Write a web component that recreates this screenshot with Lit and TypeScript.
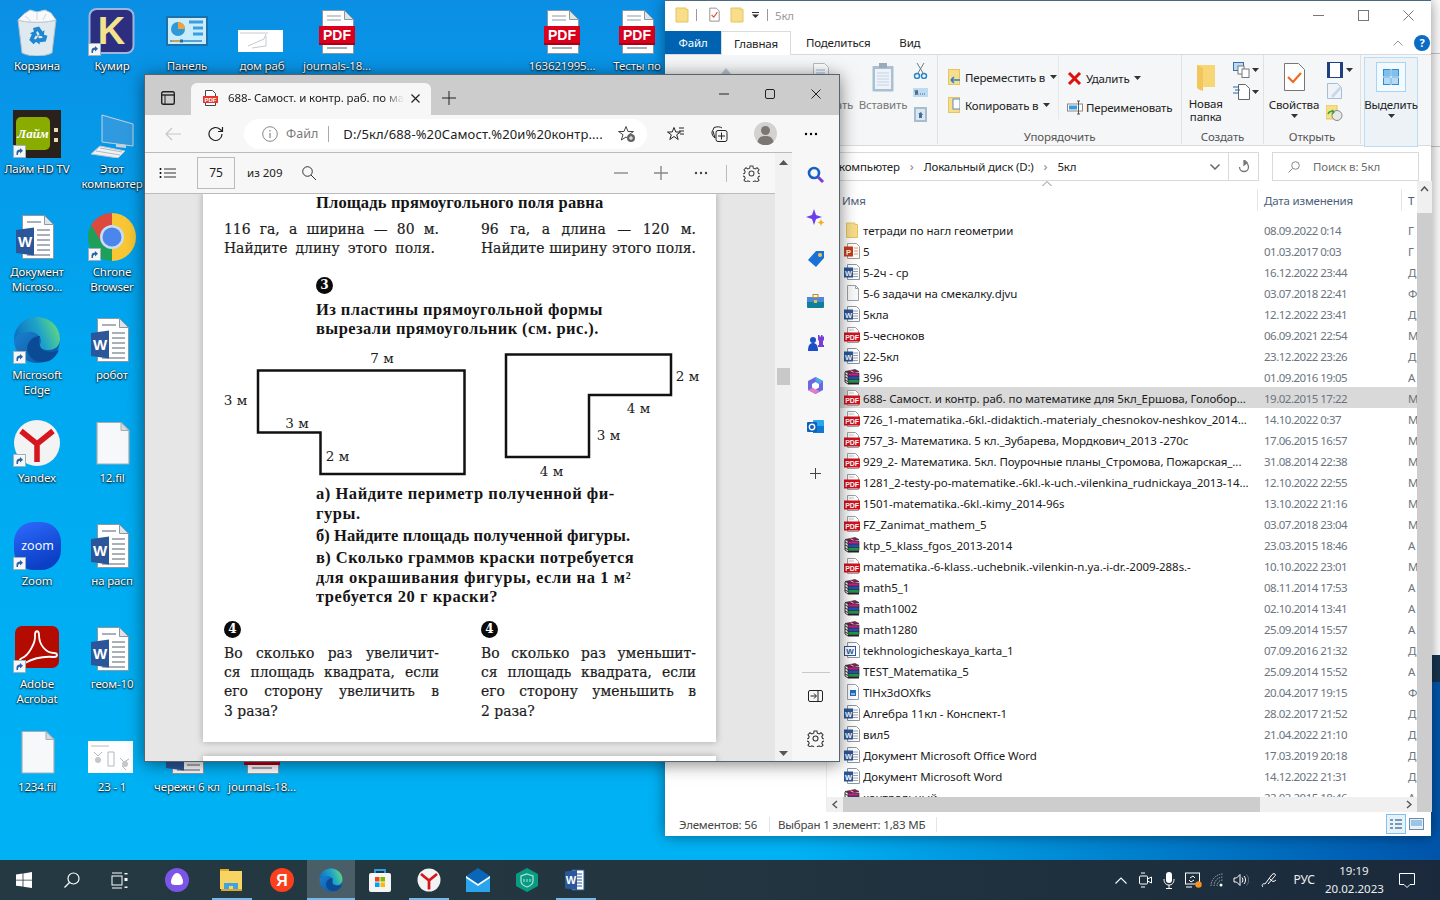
import { LitElement, html, css, svg } from 'lit';
import { customElement } from 'lit/decorators.js';

const ic = (w: number, h: number, vb: string, body: unknown) =>
  html`<svg width=${w} height=${h} viewBox=${vb} style="display:block;flex:none">${body}</svg>`;

const shortcut = svg`<g transform="translate(0 35)"><rect x=".5" y=".5" width="12" height="12" fill="#f4f6f8" stroke="#9fb0bd"/><path d="M3.5 10V7.5C3.5 5.5 5 4.500 7 4.500V3l3 2.700-3 2.700V6.800c-1.400 0-2 .6-2 3.200z" fill="#2a62a8"/></g>`;

const bigDoc = svg`<path d="M9.500 2.500h22l9 9v34h-31z" fill="#fff" stroke="#8c98a4"/><path d="M31.500 2.500v9h9z" fill="#dfe4e8" stroke="#8c98a4"/>`;
const bigPdf = ic(48, 48, '0 0 48 48', svg`${bigDoc}
  <path d="M14 8h14M14 12h14" stroke="#b5bcc3" stroke-width="1.400"/>
  <rect x="6" y="18" width="36" height="19" fill="#d8001c"/><rect x="6" y="35" width="36" height="2" fill="#a80016"/>
  <text x="24" y="32" text-anchor="middle" font-family="Liberation Sans" font-weight="700" font-size="14" fill="#fff">PDF</text>
  <path d="M14 40h20" stroke="#a9b0b7" stroke-width="2"/>`);
const bigWord = ic(48, 48, '0 0 48 48', svg`${bigDoc}
  <path d="M14 9h14M24 17h13M24 22h13M24 27h13M24 32h13M24 37h13M14 42h23" stroke="#a9b0b7" stroke-width="1.800"/>
  <path d="M3 17l18-2.500v28L3 40z" fill="#2b579a"/>
  <text x="12" y="34" text-anchor="middle" font-family="Liberation Sans" font-weight="700" font-size="15" fill="#fff">W</text>`);
const bigBlank = ic(48, 48, '0 0 48 48', svg`<path d="M9 3.500h24l8 8v33.500H9z" fill="#f6f8fa" stroke="#a4acb4" stroke-width="1.200"/><path d="M33 3.500v8h8z" fill="#d5dade" stroke="#a4acb4"/>`);

const edgeBody = svg`
  <defs><linearGradient id="eg1" x1="0" x2="1" y1=".6" y2=".3"><stop offset="0" stop-color="#0d6fc0"/><stop offset=".55" stop-color="#1fa3c9"/><stop offset="1" stop-color="#64dc7c"/></linearGradient>
  <linearGradient id="eg2" x1="0" x2="1" y1="0" y2="1"><stop offset="0" stop-color="#1b8ad8"/><stop offset="1" stop-color="#0c4f9e"/></linearGradient></defs>
  <circle cx="24" cy="24" r="23" fill="url(#eg2)"/>
  <path d="M1 24C1 11 11 1 24 1c13 0 23 10 23 22 0 7-5 11-11 11-6 0-10-2-10-4 0-1 2-2 2-5 0-5-6-10-13-9C8 17 1 20 1 24z" fill="url(#eg1)"/>
  <path d="M27 20c-9 0-15 9-12 17 3 8 13 11 21 8 4-2 8-6 10-11-4 2-9 3-14 1-5-2-7-8-5-15z" fill="#0b4a94"/>`;
const yandexBody = svg`<circle cx="24" cy="24" r="23" fill="#f3f3f3"/><path d="M8 12l16 13 16-13M24 25v18" fill="none" stroke="#d6151e" stroke-width="5.500"/>`;
const recycleArrow = svg`<path d="M19 19l6-1.500 3.500 5 2-1.200-.8 6.200-6-1 2-1.200-2.200-3.300-3 3z" fill="#1f86d0"/>`;

const desktopIcons: Record<string, unknown> = {
  bin: ic(48, 48, '0 0 48 48', svg`
    <path d="M5 12c10 3 28 3 38 0l-4 33c-8 4-22 4-30 0z" fill="#dfe9f0" stroke="#aebbc6"/>
    <path d="M5 12l6-6 6-4 7 2 8-2 6 3 5 7c-10 3-28 3-38 0z" fill="#f7f9fa" stroke="#c3ccd3"/>
    <path d="M12 8l6 5M24 5v7M33 6l-3 6" stroke="#d0d8de"/>
    <g transform="translate(1 1)">${recycleArrow}<g transform="rotate(120 24 27)">${recycleArrow}</g><g transform="rotate(240 24 27)">${recycleArrow}</g></g>`),
  kumir: ic(48, 48, '0 0 48 48', svg`<rect x="1.500" y="1" width="44" height="44" rx="7" fill="#2c2f80" stroke="#9fb6dc" stroke-width="2"/>
    <text x="23.500" y="36" text-anchor="middle" font-family="Liberation Sans" font-weight="700" font-size="38" fill="#f4e28c">K</text>${shortcut}`),
  panel: ic(48, 48, '0 0 48 48', svg`<rect x="3" y="8" width="42" height="30" fill="#1d6fa8"/><rect x="5" y="10" width="38" height="26" fill="#c8ecfb"/>
    <circle cx="15" cy="21" r="7" fill="#2c9ad8"/><path d="M15 21v-7a7 7 0 017 7z" fill="#f2a23a"/>
    <path d="M26 14h14M30 20h10M30 26h10" stroke="#3a9ee0" stroke-width="3"/><path d="M7 33h32" stroke="#2c8ccc" stroke-width="1.500"/><path d="M9 33h8" stroke="#e8a23a" stroke-width="1.500"/><rect x="17" y="31.500" width="3" height="3" fill="#1d6fa8"/>`),
  sketch: ic(48, 48, '0 0 48 48', svg`<rect x="0" y="22" width="45" height="22" fill="#fff"/><path d="M10 38l16-7 2-5M14 40l14-2 0-10M2 25h28" stroke="#b8bcc0" stroke-width=".8" fill="none"/>`),
  pdf: bigPdf,
  word: bigWord,
  blank: bigBlank,
  laim: ic(48, 48, '0 0 48 48', svg`<rect width="48" height="48" fill="#2a211d"/><rect x="3" y="7" width="34" height="33" rx="5" fill="#8aab00"/>
    <text x="20" y="28" text-anchor="middle" font-family="Liberation Serif" font-style="italic" font-weight="700" font-size="13" fill="#fff">Лайм</text>
    <rect x="41" y="18" width="4" height="4" fill="#e8dcb8"/><rect x="41" y="28" width="4" height="4" fill="#e8dcb8"/>${shortcut}`),
  pc: ic(48, 48, '0 0 48 48', svg`<path d="M14 5l31 9v22l-31-4z" fill="#2f9ae0" stroke="#c8d2da"/><path d="M28 34l10 1 0 3-10-1z" fill="#c8d2da"/><path d="M12 36l25 5-7 7-27-4z" fill="#eef2f5" stroke="#b8c2ca"/><path d="M8 41l24 4M12 38l22 4" stroke="#b0bac2"/>`),
  chrome: ic(48, 48, '0 0 48 48', svg`
    <path d="M24 0a24 24 0 0124 24 24 24 0 01-24 24l0-13 0-22z" fill="#f9c733"/>
    <path d="M24 0A24 24 0 003 12l10 17 11-16z" fill="#db4a3c"/>
    <path d="M3 12a24 24 0 0021 36V35L13 29z" fill="#1fa05a"/>
    <circle cx="24" cy="24" r="12" fill="#c9def6"/><circle cx="24" cy="24" r="9.500" fill="#4a86ec"/>${shortcut}`),
  edge: ic(48, 48, '0 0 48 48', svg`${edgeBody}${shortcut}`),
  yandex: ic(48, 48, '0 0 48 48', svg`${yandexBody}${shortcut}`),
  zoom: ic(48, 48, '0 0 48 48', svg`<defs><linearGradient id="zg" x1="0" x2=".4" y1="0" y2="1"><stop offset="0" stop-color="#2e6bff"/><stop offset="1" stop-color="#0b3fc4"/></linearGradient></defs>
    <rect x="1" y="0" width="47" height="48" rx="20" fill="url(#zg)"/><text x="24.500" y="28" text-anchor="middle" font-family="Open Sans" font-weight="500" font-size="12.500" fill="#fff">zoom</text>${shortcut}`),
  acrobat: ic(48, 48, '0 0 48 48', svg`<rect x="2" y="1" width="44" height="42" rx="7" fill="#b30b00"/>
    <path d="M9 33c6-2 14-15 13-23 0-5 4-5 4 0 0 10 7 18 15 18 4 0 4 4 0 4-11-1-20 1-29 6-5 2-7-3-3-5z" fill="none" stroke="#fff" stroke-width="1.800"/>${shortcut}`),
  photo: ic(48, 48, '0 0 48 48', svg`<rect x="0" y="13" width="45" height="32" fill="#fff"/><path d="M3 18h18M6 24l4 4 4-4M20 24h6v14h-6zM32 30l4 4 5-3M34 38l4 4" stroke="#b4b8bc" fill="none"/><circle cx="10" cy="32" r="3" fill="#c4c8cc"/><circle cx="37" cy="36" r="3" fill="#c4c8cc"/>`),
};

const desktopItems: [number, number, string, string][] = [
  [37, 8, 'bin', 'Корзина'], [112, 8, 'kumir', 'Кумир'], [187, 8, 'panel', 'Панель'], [262, 8, 'sketch', 'дом раб'],
  [337, 8, 'pdf', 'journals-18...'], [562, 8, 'pdf', '163621995...'], [637, 8, 'pdf', 'Тесты по'],
  [37, 110, 'laim', 'Лайм HD TV'], [112, 110, 'pc', 'Этот компьютер'],
  [37, 213, 'word', 'Документ Microso...'], [112, 213, 'chrome', 'Chrone Browser'],
  [37, 316, 'edge', 'Microsoft Edge'], [112, 316, 'word', 'робот'],
  [37, 419, 'yandex', 'Yandex'], [112, 419, 'blank', '12.fil'],
  [37, 522, 'zoom', 'Zoom'], [112, 522, 'word', 'на расп'],
  [37, 625, 'acrobat', 'Adobe Acrobat'], [112, 625, 'word', 'геом-10'],
  [37, 728, 'blank', '1234.fil'], [112, 728, 'photo', '23 - 1'], [187, 728, 'word', 'чережн 6 кл'], [262, 728, 'pdf', 'journals-18...'],
];

// small 16px list icons
const docOutline = svg`<path d="M3.500.5h8l3 3v12h-11z" fill="#fff" stroke="#9aa3ab"/><path d="M5 3h5" stroke="#c4c9ce"/>`;
const smallIcons: Record<string, unknown> = {
  folder: ic(16, 16, '0 0 16 16', svg`<path d="M2.500 1h8.500v1.500H13.500v13h-11z" fill="#f8dd8a" stroke="#e6c560"/>`),
  pdf: ic(16, 16, '0 0 16 16', svg`${docOutline}<rect x="0" y="5.500" width="16" height="9" fill="#d4111e"/><text x="8" y="12.500" text-anchor="middle" font-family="Liberation Sans" font-weight="700" font-size="7" fill="#fff">PDF</text>`),
  word: ic(16, 16, '0 0 16 16', svg`<path d="M3.500.5h9l3 3v12h-12z" fill="#fff" stroke="#8e979f"/><path d="M9 5h5M9 7.500h5M9 10h5M9 12.500h5" stroke="#9aa4ad"/><rect x="0" y="3.500" width="9" height="10" fill="#2b579a"/><text x="4.500" y="11.500" text-anchor="middle" font-family="Liberation Sans" font-weight="700" font-size="7.500" fill="#fff">W</text>`),
  wordx: ic(16, 16, '0 0 16 16', svg`<path d="M3.500.5h9l3 3v12h-12z" fill="#fff" stroke="#8e979f"/><rect x=".5" y="4.500" width="11" height="9" fill="#fff" stroke="#2b579a"/><text x="6" y="12" text-anchor="middle" font-family="Liberation Sans" font-weight="700" font-size="8" fill="#2b579a">W</text>`),
  ppt: ic(16, 16, '0 0 16 16', svg`<path d="M3.500.5h9l3 3v12h-12z" fill="#fff" stroke="#a69c96"/><path d="M10 5h4M10 8h4M10 11h4" stroke="#e09a80"/><rect x="0" y="3.500" width="9" height="10" fill="#c43e1c"/><text x="4.500" y="11.500" text-anchor="middle" font-family="Liberation Sans" font-weight="700" font-size="7.500" fill="#fff">P</text>`),
  rar: ic(16, 16, '0 0 16 16', svg`<path d="M1 2.500L11 .5l4 2-10 2z" fill="#8b1c6e" stroke="#222" stroke-width=".6"/><rect x="4" y="4" width="11" height="3" fill="#c0228a" stroke="#222" stroke-width=".6"/><rect x="4" y="7.300" width="11" height="3" fill="#1f4fc8" stroke="#222" stroke-width=".6"/><rect x="4" y="10.600" width="11" height="3" fill="#1b9a4a" stroke="#222" stroke-width=".6"/><path d="M4 14h11v1.500H4z" fill="#222"/><path d="M1 3v10l3 2M1 5l3 1.500M1 8l3 1.500M1 11l3 1.500" stroke="#222" fill="none" stroke-width=".9"/><path d="M6.500 1.700l3 1.500" stroke="#f2d34a"/>`),
  blank: ic(16, 16, '0 0 16 16', svg`<path d="M3.500.5h8l3 3v12h-11z" fill="#fafafa" stroke="#9aa3ab"/><path d="M11.500.5v3h3" fill="none" stroke="#9aa3ab"/>`),
  img: ic(16, 16, '0 0 16 16', svg`<path d="M3.500.5h8l3 3v12h-11z" fill="#fff" stroke="#9aa3ab"/><rect x="6" y="6" width="6" height="6" fill="#1f6fc0"/><rect x="7" y="9" width="4" height="2" fill="#7fb8ea"/>`),
};

const files: [string, string, string, string][] = [
  ['folder', 'тетради по нагл геометрии', '08.09.2022 0:14', 'Г'],
  ['ppt', '5', '01.03.2017 0:03', 'Г'],
  ['word', '5-2ч - ср', '16.12.2022 23:44', 'Д'],
  ['blank', '5-6 задачи на смекалку.djvu', '03.07.2018 22:41', 'Ф'],
  ['word', '5кла', '12.12.2022 23:41', 'Д'],
  ['pdf', '5-чесноков', '06.09.2021 22:54', 'М'],
  ['word', '22-5кл', '23.12.2022 23:26', 'Д'],
  ['rar', '396', '01.09.2016 19:05', 'А'],
  ['pdf', '688- Самост. и контр. раб. по математике для 5кл_Ершова, Голобор...', '19.02.2015 17:22', 'М'],
  ['pdf', '726_1-matematika.-6kl.-didaktich.-materialy_chesnokov-neshkov_2014...', '14.10.2022 0:37', 'М'],
  ['pdf', '757_3- Математика. 5 кл._Зубарева, Мордкович_2013 -270с', '17.06.2015 16:57', 'М'],
  ['pdf', '929_2- Математика. 5кл. Поурочные планы_Стромова, Пожарская_...', '31.08.2014 22:38', 'М'],
  ['pdf', '1281_2-testy-po-matematike.-6kl.-k-uch.-vilenkina_rudnickaya_2013-14...', '12.10.2022 22:55', 'М'],
  ['pdf', '1501-matematika.-6kl.-kimy_2014-96s', '13.10.2022 21:16', 'М'],
  ['pdf', 'FZ_Zanimat_mathem_5', '03.07.2018 23:04', 'М'],
  ['rar', 'ktp_5_klass_fgos_2013-2014', '23.03.2015 18:46', 'А'],
  ['pdf', 'matematika.-6-klass.-uchebnik.-vilenkin-n.ya.-i-dr.-2009-288s.-', '10.10.2022 23:01', 'М'],
  ['rar', 'math5_1', '08.11.2014 17:53', 'А'],
  ['rar', 'math1002', '02.10.2014 13:41', 'А'],
  ['rar', 'math1280', '25.09.2014 15:57', 'А'],
  ['wordx', 'tekhnologicheskaya_karta_1', '07.09.2016 21:32', 'Д'],
  ['rar', 'TEST_Matematika_5', '25.09.2014 15:52', 'А'],
  ['img', 'TlHx3dOXfks', '20.04.2017 19:15', 'Ф'],
  ['word', 'Алгебра 11кл - Конспект-1', '28.02.2017 21:52', 'Д'],
  ['word', 'вил5', '21.04.2022 21:10', 'Д'],
  ['word', 'Документ Microsoft Office Word', '17.03.2019 20:18', 'Д'],
  ['word', 'Документ Microsoft Word', '14.12.2022 21:31', 'Д'],
  ['rar', 'контрольный', '22.03.2015 18:46', 'А'],
];

const caret = html`<svg width="7" height="4" viewBox="0 0 7 4" style="flex:none;display:block"><path d="M0 0h7L3.500 4z" fill="#333"/></svg>`;
const folderSm = ic(14, 16, '0 0 14 16', svg`<path d="M1 1h10v1.500h2V15H1z" fill="#f8dd8a" stroke="#e6c560"/>`);
const propsDoc = svg`<path d="M2.500.5h9l4 4v14h-13z" fill="#fff" stroke="#6e6e6e"/>`;
const gear = (c: string) => svg`<circle cx="12" cy="12" r="3.500" fill="none" stroke=${c} stroke-width="1.500"/><path d="M10 1.500h4l.6 3 2.600 1.100 2.600-1.700 2.800 2.800-1.700 2.600 1.100 2.600 3 .6v3l-3 .6-1.100 2.600 1.700 2.600-2.800 2.800-2.600-1.700-2.600 1.100-.6 3h-4l-.6-3-2.600-1.100-2.600 1.700-2.800-2.800 1.700-2.600-1.100-2.600-3-.6v-3l3-.6 1.100-2.600-1.700-2.600 2.800-2.800 2.600 1.700 2.600-1.100z" fill="none" stroke=${c} stroke-width="1.500"/>`;

@customElement('explorer-window')
class ExplorerWindow extends LitElement {
  static styles = css`
    :host { display: flex; flex-direction: column; position: absolute; left: 665px; top: 0; width: 766px; height: 836px;
      background: #fff; font: 11.5px/15px "Noto Sans", sans-serif; letter-spacing: -.18px; color: #222; border-top: 1px solid #4b6a82;
      box-sizing: border-box; box-shadow: 0 0 14px rgba(0,0,0,.45); }
    .title { height: 30px; box-sizing: border-box; padding: 0 0 2px 10px; display: flex; align-items: center; flex: none; }
    .vsep { width: 1px; height: 12px; background: #9a9a9a; margin: 0 11px; }
    .name { color: #9a9a9a; margin-left: 7px; flex: 1; }
    .winbtn { width: 45px; display: flex; justify-content: center; }
    .tabs { height: 24px; display: flex; align-items: stretch; flex: none; position: relative; }
    .tabs::after { content: ''; position: absolute; left: 0; right: 0; bottom: 0; height: 1px; background: #dadbdc; }
    .tab { line-height: 23px; padding: 0 15px; }
    .tab.file { width: 56px; padding: 0; text-align: center; background: #0063b1; color: #fff; }
    .tab.home { width: 70px; padding: 0; box-sizing: border-box; text-align: center; background: #fff; border: 1px solid #dadbdc; border-bottom: 0; z-index: 1; }
    .tab.view { padding-left: 14px; }
    .help { margin-left: auto; display: flex; align-items: center; gap: 11px; padding-right: 1px; }
    .helpc { width: 16px; height: 16px; border-radius: 50%; background: #0a6cc4; color: #fff; font-weight: 700; text-align: center; line-height: 16px; font-size: 11px; }
    .ribbon { height: 91px; background: #f5f6f7; border-bottom: 1px solid #dadbdc; display: flex; flex: none; box-sizing: border-box; }
    .grp { display: flex; flex-direction: column; border-right: 1px solid #dfe1e3; box-sizing: border-box; height: 89px; }
    .body { flex: 1; display: flex; min-height: 0; }
    .lbl { height: 16px; line-height: 18px; text-align: center; color: #555; flex: none; }
    .g1 { width: 273px; } .g2 { width: 244px; } .g3 { width: 82px; } .g4 { width: 97px; } .g5 { width: 70px; border: 0; }
    .g1 .body { justify-content: flex-end; padding-right: 7px; color: #777; }
    .big { display: flex; flex-direction: column; align-items: center; padding-top: 8px; text-align: center; }
    .bigicon { height: 30px; display: flex; align-items: flex-start; margin-bottom: 4px; }
    .lh { line-height: 13px; }
    .cr { display: flex; height: 4px; align-items: center; margin-top: 2px; flex: none; }
    .col { display: flex; flex-direction: column; align-items: center; justify-content: flex-start; padding-top: 8px; gap: 9px; }
    .stack { display: flex; flex-direction: column; padding-top: 8.5px; }
    .srow { height: 29px; display: flex; align-items: center; gap: 5px; }
    .pane { border-right: 1px solid #e6e8ea; height: 64px; padding-left: 10px; }
    .sel { width: 52px; height: 84px; margin: 2px 0 0 3px; background: #edf2f7; border: 1px solid #b9dcf8; display: flex; flex-direction: column; align-items: center; padding-top: 4px; box-sizing: content-box; flex: none; }
    .selbox { width: 28px; height: 28px; border: 1px solid #a6d4f7; display: flex; align-items: center; justify-content: center; background: #f4f9fd; margin-bottom: 5px; flex: none; }
    .addr { height: 29px; margin: 6px 12px 0 0; display: flex; flex: none; }
    .crumbs { width: 564px; flex: none; box-sizing: border-box; border: 1px solid #d9d9d9; border-left: 0; display: flex; align-items: center; padding-left: 174px; gap: 10px; color: #222; }
    .crumbs i { color: #888; font-style: normal; font-size: 13px; }
    .crumbs .sp { flex: 1; }
    .refresh { width: 30px; flex: none; box-sizing: border-box; border: 1px solid #d9d9d9; border-left: 0; display: flex; align-items: center; justify-content: center; }
    .search { width: 147px; flex: none; margin-left: 13px; box-sizing: border-box; border: 1px solid #d9d9d9; display: flex; align-items: center; padding-left: 15px; gap: 13px; color: #6d6d6d; }
    .main { flex: 1; display: flex; min-height: 0; }
    .nav { width: 161px; border-right: 1px solid #eceded; flex: none; }
    .listing { width: 590px; flex: none; display: flex; flex-direction: column; min-height: 0; }
    .head { height: 30px; display: flex; align-items: stretch; padding-top: 8px; box-sizing: border-box; color: #4c607a; position: relative; flex: none; }
    .sort { position: absolute; left: 215px; top: 0; }
    .hname { width: 431px; padding-left: 15px; box-sizing: border-box; border-right: 1px solid #e4e5e6; line-height: 23px; }
    .hdate { width: 144px; padding-left: 6px; box-sizing: border-box; border-right: 1px solid #e4e5e6; line-height: 23px; }
    .htype { padding-left: 6px; line-height: 23px; }
    .rows { flex: 1; overflow: hidden; padding-top: 8px; }
    .row { height: 21px; display: grid; grid-template-columns: 36px 395px 144px 15px; align-items: center; white-space: nowrap; }
    .row.on { background: #d9d9d9; }
    .ri { padding-left: 17px; }
    .rn { overflow: hidden; padding: 2px 2px 0 0; color: #1a1a1a; letter-spacing: -.06px; }
    .rd { padding: 2px 0 0 6px; color: #6b7480; letter-spacing: -.5px; }
    .rt { padding: 2px 0 0 6px; color: #6b7480; overflow: hidden; }
    .vbar { width: 15px; background: #f0f0f0; flex: none; display: flex; flex-direction: column; align-items: center; }
    .thumb { width: 15px; flex: 1; background: #cdcdcd; margin-top: 15px; }
    .arrow { height: 17px; display: flex; align-items: center; justify-content: center; }
    .hbar { height: 15px; display: flex; background: #f0f0f0; flex: none; }
    .hthumb { width: 417px; background: #cdcdcd; }
    .harr { width: 16px; display: flex; align-items: center; justify-content: center; }
    .status { height: 24px; display: flex; align-items: center; flex: none; color: #444; position: relative; }
    .s1 { width: 105px; padding-left: 14px; box-sizing: border-box; border-right: 1px solid #e4e5e6; flex: none; }
    .s2 { width: 167px; padding-left: 8px; box-sizing: border-box; border-right: 1px solid #e4e5e6; flex: none; }
    .views { margin-left: auto; display: flex; padding-right: 5px; }
    .v { width: 20px; height: 20px; box-sizing: border-box; display: flex; align-items: center; justify-content: center; }
    .v.on { border: 1px solid #84c0ee; background: #e6f2fb; }
  `;

  render() {
    return html`
      <div class="title">
        ${folderSm}<span class="vsep" style="margin-left:7px"></span>
        ${ic(13, 16, '0 0 18 20', svg`${propsDoc}<path d="M5 10l3 3 5-7" fill="none" stroke="#e2562a" stroke-width="1.600"/>`)}
        <span style="width:9px"></span>${folderSm}
        <span style="width:8px"></span>${ic(7, 6, '0 0 7 6', svg`<path d="M0 0h7v1H0zM0 2.500h7L3.500 6z" fill="#333"/>`)}
        <span class="vsep" style="margin-left:8px;margin-right:0"></span>
        <span class="name">5кл</span>
        <span class="winbtn">${ic(11, 11, '0 0 11 11', svg`<path d="M0 5.500h11" stroke="#777"/>`)}</span>
        <span class="winbtn">${ic(11, 11, '0 0 11 11', svg`<rect x=".5" y=".5" width="10" height="10" fill="none" stroke="#777"/>`)}</span>
        <span class="winbtn">${ic(11, 11, '0 0 11 11', svg`<path d="M.5.5l10 10M10.500.5l-10 10" stroke="#777"/>`)}</span>
      </div>
      <div class="tabs">
        <span class="tab file">Файл</span><span class="tab home">Главная</span>
        <span class="tab">Поделиться</span><span class="tab view">Вид</span>
        <span class="help">
          ${ic(10, 6, '0 0 10 6', svg`<path d="M.5 5.500L5 1l4.500 4.500" fill="none" stroke="#999"/>`)}
          <span class="helpc">?</span>
        </span>
      </div>
      <div class="ribbon">
        <div class="grp g1"><div class="body">
          <div class="big" style="width:50px;margin-right:39px"><div class="bigicon" style="padding-top:5px">${ic(12, 12, '0 0 12 12', svg`<path d="M6 0l5 6H1z" fill="#b9c7d4"/>`)}</div></div>
          <div class="big" style="width:62px;margin-right:6px"><div class="bigicon">${ic(16, 24, '0 0 16 24', svg`<path d="M.5.5h11l4 4v19H.5z" fill="#fff" stroke="#b6bcc2"/><path d="M3 7h9M3 10h9M3 13h9" stroke="#9dbde0"/>`)}</div><span>Копировать</span></div>
          <div class="big" style="width:50px"><div class="bigicon">${ic(22, 29, '0 0 22 29', svg`<rect x=".5" y="3" width="21" height="25.500" rx="1" fill="#a9bfd2"/><rect x="3" y="6" width="16" height="20" fill="#eef3f9"/><path d="M5 10h12M5 13h12M5 16h12M5 19h12M5 22h12" stroke="#c4d3e4"/><rect x="7" y="0" width="8" height="5" fill="#96acbe"/>`)}</div><span>Вставить</span></div>
          <div class="col" style="width:20px;margin-left:2px">
            ${ic(15, 16, '0 0 15 16', svg`<path d="M4 0l6 10M11 0L5 10" stroke="#6b7a88"/><circle cx="4" cy="13" r="2.500" fill="none" stroke="#2a86c8" stroke-width="1.500"/><circle cx="11" cy="13" r="2.500" fill="none" stroke="#2a86c8" stroke-width="1.500"/>`)}
            ${ic(15, 9, '0 0 15 9', svg`<rect width="15" height="9" fill="#bcdcf4"/><path d="M2 2l1 5 1-5 1 5M7 6h1M9 6h1M11 6h1" stroke="#345" stroke-width=".8" fill="none"/>`)}
            ${ic(13, 16, '0 0 13 16', svg`<rect y="1" width="13" height="15" fill="#a6bccf"/><rect x="2" y="3" width="9" height="11" fill="#dde6ee"/><path d="M5 12V8h-1l3-2 2 3H8v3z" fill="#3f6f9e"/>`)}
          </div>
        </div><div class="lbl"></div></div>
        <div class="grp g2"><div class="body">
          <div class="stack pane" style="width:121px;box-sizing:border-box">
            <div class="srow">${ic(12, 16, '0 0 12 16', svg`<rect x=".5" y=".5" width="11" height="15" fill="#f8dd8a" stroke="#e6c560"/><path d="M3 11h9M3 11l3-3M3 11l3 3" stroke="#2a7fd0" stroke-width="1.600" fill="none"/>`)}<span>Переместить в</span>${caret}</div>
            <div class="srow">${ic(12, 16, '0 0 12 16', svg`<rect x=".5" y=".5" width="11" height="15" fill="#f8dd8a" stroke="#e6c560"/><rect x="5" y="2" width="7" height="10" fill="#fff" stroke="#5a8abf"/>`)}<span>Копировать в</span>${caret}</div>
          </div>
          <div class="stack" style="padding-left:8px">
            <div class="srow" style="gap:4px">${ic(15, 13, '0 0 15 13', svg`<path d="M2 1l11 11M13 1L2 12" stroke="#e01010" stroke-width="3"/>`)}<span>Удалить</span>${caret}</div>
            <div class="srow" style="gap:3px">${ic(16, 15, '0 0 16 15', svg`<rect x=".5" y="4" width="15" height="7" fill="#fff" stroke="#888"/><rect x="2" y="5.500" width="8" height="4" fill="#3a9ae0"/><path d="M10 1h3M11.500 1v13M10 14h3" stroke="#555"/>`)}<span>Переименовать</span></div>
          </div>
        </div><div class="lbl">Упорядочить</div></div>
        <div class="grp g3"><div class="body">
          <div class="big" style="width:48px;padding-top:9px">
            <div class="bigicon" style="height:27px;margin-bottom:6px">${ic(18, 27, '0 0 18 27', svg`<path d="M0 1h7v0h11v22H6l-2 4-4-3z" fill="#f7d676"/><path d="M0 1l6 3v23L0 24z" fill="#f2c65a"/>`)}</div><span class="lh">Новая<br/>папка</span>
          </div>
          <div class="col" style="padding-top:7px;gap:6px;width:34px">
            <div style="display:flex;gap:2px;align-items:center">${ic(17, 16, '0 0 17 16', svg`<rect x=".5" y=".5" width="10" height="8" fill="#b9dbf5" stroke="#3a6ea5"/><rect x="5" y="4" width="6" height="8" fill="#fff" stroke="#777"/><rect x="9" y="7" width="7" height="8.500" fill="#fff" stroke="#777"/>`)}${caret}</div>
            <div style="display:flex;gap:2px;align-items:center">${ic(17, 16, '0 0 17 16', svg`<path d="M5.500.5h7l4 4v11h-11z" fill="#fff" stroke="#666"/><path d="M0 3h6M2 6h5M0 9h6" stroke="#2a62a8"/>`)}${caret}</div>
          </div>
        </div><div class="lbl">Создать</div></div>
        <div class="grp g4"><div class="body">
          <div class="big" style="width:60px;padding-top:8px">
            <div class="bigicon" style="height:29px;margin-bottom:5px">${ic(21, 28, '0 0 21 28', svg`<path d="M.5.5h14l6 6v21H.5z" fill="#fff" stroke="#777"/><path d="M4 14l5 5 8-9" fill="none" stroke="#ee6a1f" stroke-width="2.200"/>`)}</div>
            <span>Свойства</span><span class="cr">${caret}</span>
          </div>
          <div class="col" style="width:36px;padding-top:7px;gap:5px;align-items:flex-start">
            <div style="display:flex;gap:3px;align-items:center;margin-left:3px">${ic(16, 16, '0 0 16 16', svg`<rect x=".5" y=".5" width="15" height="15" fill="#fff" stroke="#1f3f7f"/><rect x="0" y="0" width="3" height="16" fill="#1f3f7f"/><rect x="13" y="0" width="3" height="16" fill="#1f3f7f"/>`)}${caret}</div>
            <span style="margin-left:3px">${ic(16, 16, '0 0 16 16', svg`<path d="M.5.5h10l4 4v11H.5z" fill="#eef3f9" stroke="#a5bdd5"/><path d="M4 13L13 3l2 2-9 10z" fill="#c8d8e8"/>`)}</span>
            <span style="margin-left:2px;margin-top:1px">${ic(17, 16, '0 0 17 16', svg`<rect y="0" width="11" height="14" fill="#f8dd8a" stroke="#e6c560"/><circle cx="11" cy="10.500" r="5" fill="#e8e8e8" stroke="#888"/><path d="M2 9a4 4 0 016-2M6 5l2 2-2 2" stroke="#2fa82f" stroke-width="1.500" fill="none"/>`)}</span>
          </div>
        </div><div class="lbl">Открыть</div></div>
        <div class="grp g5">
          <div class="sel">
            <div class="selbox">${ic(16, 16, '0 0 16 16', svg`<rect width="16" height="16" fill="#2a8fd8"/><path d="M8 0v16M0 8h16" stroke="#fff"/><rect x="1" y="1" width="6" height="6" fill="#7fc0ec"/><rect x="9" y="1" width="6" height="6" fill="#7fc0ec"/><rect x="1" y="9" width="6" height="6" fill="#b5daf4"/><rect x="9" y="9" width="6" height="6" fill="#b5daf4"/>`)}</div>
            <span>Выделить</span><span class="cr">${caret}</span>
          </div>
        </div>
      </div>
      <div class="addr">
        <div class="crumbs"><span>компьютер</span><i>›</i><span>Локальный диск (D:)</span><i>›</i><span>5кл</span><span class="sp"></span>
          <span style="margin-right:8px">${ic(10, 6, '0 0 10 6', svg`<path d="M.5.5L5 5 9.500.5" fill="none" stroke="#666" stroke-width="1.500"/>`)}</span></div>
        <div class="refresh">${ic(12, 13, '0 0 12 13', svg`<path d="M6 2.500a4.500 4.500 0 11-4.500 4.500M6 0v5l3-2.500z" fill="none" stroke="#777" stroke-width="1.300"/>`)}</div>
        <div class="search">${ic(12, 12, '0 0 12 12', svg`<circle cx="7.500" cy="4.500" r="3.800" fill="none" stroke="#888"/><path d="M4.500 7.500L.5 11.500" stroke="#888"/>`)}<span>Поиск в: 5кл</span></div>
      </div>
      <div class="main">
        <div class="nav"></div>
        <div class="listing">
          <div class="head">
            <span class="sort">${ic(10, 6, '0 0 10 6', svg`<path d="M.5 5L5 .5 9.500 5" fill="none" stroke="#888"/>`)}</span>
            <span class="hname">Имя</span><span class="hdate">Дата изменения</span><span class="htype">Т</span>
          </div>
          <div class="rows">
            ${files.map(([t, n, d, k], i) => html`<div class="row ${i === 8 ? 'on' : ''}">
              <span class="ri">${smallIcons[t]}</span><span class="rn">${n}</span><span class="rd">${d}</span><span class="rt">${k}</span></div>`)}
          </div>
          <div class="hbar">
            <span class="harr">${ic(6, 9, '0 0 6 9', svg`<path d="M5 1L1 4.500 5 8" fill="none" stroke="#555" stroke-width="1.500"/>`)}</span>
            <span class="hthumb"></span><span style="flex:1"></span>
            <span class="harr">${ic(6, 9, '0 0 6 9', svg`<path d="M1 1l4 3.500L1 8" fill="none" stroke="#555" stroke-width="1.500"/>`)}</span>
          </div>
        </div>
        <div class="vbar">
          <div class="arrow" style="position:relative;top:-1px">${ic(9, 6, '0 0 9 6', svg`<path d="M1 5l3.500-4L8 5" fill="none" stroke="#555" stroke-width="1.500"/>`)}</div>
          <div class="thumb"></div>
        </div>
      </div>
      <div class="status">
        <span class="s1">Элементов: 56</span><span class="s2">Выбран 1 элемент: 1,83 МБ</span>
        <span class="views">
          <span class="v on">${ic(14, 12, '0 0 14 12', svg`<path d="M1 2h3M6 2h7M1 6h3M6 6h7M1 10h3M6 10h7" stroke="#5a7a98" stroke-width="1.500"/>`)}</span>
          <span class="v">${ic(15, 12, '0 0 15 12', svg`<rect x=".5" y=".5" width="14" height="11" fill="#e8f0f7" stroke="#6a8aa8"/><rect x="2" y="2" width="11" height="6" fill="#9cc4e4"/>`)}</span>
        </span>
      </div>
    `;
  }
}

// small helpers for the page text of the pdf
const circled = (n: string) => html`<span class="num">${n}</span>`;

@customElement('edge-window')
class EdgeWindow extends LitElement {
  static styles = css`
    :host { display: flex; flex-direction: column; position: absolute; left: 144px; top: 74px; width: 696px; height: 688px; box-sizing: border-box;
      background: #f7f7f7; border: 1px solid #54656f; box-shadow: 0 2px 16px rgba(0,0,0,.5); font: 12px/16px "Noto Sans", sans-serif; color: #222; overflow: hidden; }
    .tabbar { height: 40px; background: #ccc; display: flex; flex: none; align-items: flex-end; }
    .tabtoggle { width: 46px; height: 32px; box-sizing: border-box; padding-bottom: 2px; display: flex; align-items: center; justify-content: center; }
    .tab { width: 240px; height: 32px; background: #f7f7f7; border-radius: 6px 6px 0 0; display: flex; align-items: center; padding: 0 0 2px 12px; box-sizing: border-box; }
    .tabname { width: 176px; margin-left: 10px; font-size: 11.5px; letter-spacing: -.1px; white-space: nowrap; overflow: hidden; -webkit-mask-image: linear-gradient(90deg,#000 88%,transparent); mask-image: linear-gradient(90deg,#000 88%,transparent); }
    .tabx { margin-left: 7px; }
    .plus { width: 36px; height: 32px; box-sizing: border-box; padding-bottom: 3px; display: flex; align-items: center; justify-content: center; }
    .winb { display: flex; margin-left: auto; height: 40px; padding-bottom: 2px; box-sizing: border-box; align-items: center; }
    .winb span { width: 46px; display: flex; justify-content: center; }
    .tools { height: 37px; display: flex; align-items: center; flex: none; }
    .pill { width: 403px; height: 30px; background: #fff; border-radius: 15px; display: flex; align-items: center; box-sizing: border-box; padding-left: 18px; margin-left: 13px; flex: none; }
    .file { color: #7a7a7a; margin-left: 8px; font-size: 12.5px; }
    .sep { width: 1px; height: 16px; background: #aaa; margin: 0 14px 0 10px; }
    .url { width: 266px; white-space: nowrap; overflow: hidden; font-size: 13px; letter-spacing: .12px; }
    .tb { display: flex; align-items: center; justify-content: center; flex: none; box-sizing: border-box; }
    .content { flex: 1; display: flex; min-height: 0; }
    .pdf { width: 647px; display: flex; flex-direction: column; border-top: 1px solid #bbb; border-right: 1px solid #bbb; box-sizing: border-box; flex: none; position: relative; }
    .pdfinner { flex: 1; display: flex; min-height: 0; }
    .left { width: 630px; display: flex; flex-direction: column; flex: none; }
    .ptools { height: 40px; display: flex; align-items: center; background: #f7f7f7; border-bottom: 1px solid #bbb; flex: none; }
    .pageinput { width: 38px; height: 32px; border: 1px solid #bbb; box-sizing: border-box; display: flex; align-items: center; justify-content: center; }
    .of { margin-left: 12px; width: 44px; font-size: 11.5px; }
    .right { margin-left: auto; display: flex; align-items: center; }
    .pbtn { width: 40px; display: flex; justify-content: center; }
    .pagearea { flex: 1; background: #e6e6e6; overflow: hidden; padding-left: 58px; min-height: 0; }
    .page { width: 513px; height: 549px; background: #fff; box-shadow: 0 0 7px rgba(0,0,0,.28); box-sizing: border-box; padding-left: 21px; font-family: "DejaVu Serif", serif; font-size: 13.9px; line-height: 19.3px; color: #1c1c1c; -webkit-text-stroke: .2px #1c1c1c; }
    .next { width: 513px; height: 10px; background: #fff; margin-top: 14px; box-shadow: 0 0 7px rgba(0,0,0,.28); }
    .two { display: grid; grid-template-columns: 215px 215px; column-gap: 42px; }
    .hd { font-family: "Liberation Serif", serif; font-weight: 700; font-size: 16.5px; letter-spacing: .42px; color: #151515; margin-left: 92px; white-space: nowrap; -webkit-text-stroke: 0; }
    .l15 { letter-spacing: .15px; } .l07 { letter-spacing: .07px; } .l54 { letter-spacing: .54px; } .l60 { letter-spacing: .6px; } .l55 { letter-spacing: .55px; }
    .j { display: block; text-align: justify; text-align-last: justify; white-space: nowrap; }
    .j.short { margin-right: 4px; }
    .num { display: inline-flex; width: 17px; height: 17px; border-radius: 50%; background: #0a0a0a; color: #fff; font: 700 12px/17px "DejaVu Serif", serif; justify-content: center; -webkit-text-stroke: 0; }
    .fig { display: block; margin-left: -21px; }
    .vs { width: 17px; background: #f1f1f1; display: flex; flex-direction: column; align-items: center; flex: none; }
    .vthumb { width: 13px; height: 17px; background: #c8c8c8; margin-top: 203px; }
    .side { flex: 1; display: flex; flex-direction: column; align-items: center; padding-top: 2px; }
    .sic { height: 42px; display: flex; align-items: center; justify-content: center; flex: none; }
    .sdiv { width: 28px; height: 1px; background: #c8c8c8; margin-top: 178px; }
  `;

  render() {
    return html`
      <div class="tabbar">
        <div class="tabtoggle">${ic(14, 14, '0 0 14 14', svg`<rect x=".7" y=".7" width="12.600" height="12.600" rx="1.500" fill="none" stroke="#222" stroke-width="1.400"/><path d="M1 4h12" stroke="#222" stroke-width="1.400"/><path d="M4 4v9" stroke="#222"/>`)}</div>
        <div class="tab">
          ${ic(15, 16, '0 0 15 16', svg`<path d="M2.500.5h7l3 3v12h-10z" fill="#fff" stroke="#444"/><rect x="0" y="6" width="15" height="7" fill="#e5352c"/><text x="7.500" y="11.700" text-anchor="middle" font-family="Liberation Sans" font-weight="700" font-size="6" fill="#fff">PDF</text>`)}
          <span class="tabname">688- Самост. и контр. раб. по математике для</span>
          <span class="tabx">${ic(9, 9, '0 0 9 9', svg`<path d="M.5.5l8 8M8.500.5l-8 8" stroke="#222" stroke-width="1.200"/>`)}</span>
        </div>
        <div class="plus">${ic(14, 14, '0 0 14 14', svg`<path d="M7 0v14M0 7h14" stroke="#222"/>`)}</div>
        <div class="winb">
          <span>${ic(10, 10, '0 0 10 10', svg`<path d="M0 5h10" stroke="#222"/>`)}</span>
          <span>${ic(10, 10, '0 0 10 10', svg`<rect x=".5" y=".5" width="9" height="9" rx="1.500" fill="none" stroke="#222"/>`)}</span>
          <span>${ic(10, 10, '0 0 10 10', svg`<path d="M.5.5l9 9M9.500.5l-9 9" stroke="#222"/>`)}</span>
        </div>
      </div>
      <div class="tools">
        <span class="tb" style="width:56px">${ic(16, 14, '0 0 16 14', svg`<path d="M16 7H1M7 1L1 7l6 6" fill="none" stroke="#c6c6c6" stroke-width="1.200"/>`)}</span>
        <span class="tb" style="width:30px">${ic(16, 16, '0 0 16 16', svg`<path d="M14 8a6.500 6.500 0 11-2-4.700L14 5M14.500 1v4.500H10" fill="none" stroke="#222" stroke-width="1.200"/>`)}</span>
        <div class="pill">
          ${ic(16, 16, '0 0 16 16', svg`<circle cx="8" cy="8" r="7.300" fill="none" stroke="#888"/><path d="M8 7v5M8 4v1.500" stroke="#888" stroke-width="1.200"/>`)}
          <span class="file">Файл</span><span class="sep"></span>
          <span class="url">D:/5кл/688-%20Самост.%20и%20контр....</span>
          <span style="margin-left:9px">${ic(18, 18, '0 0 18 18', svg`<path d="M8 1.500l2 5h5.500l-4.500 3.200 1.700 5.300L8 12l-4.700 3 1.700-5.300L.5 6.500H6z" fill="none" stroke="#444"/><circle cx="13" cy="13" r="4" fill="#666"/><path d="M11 13h4M13 11v4" stroke="#fff"/>`)}</span>
        </div>
        <span class="tb" style="width:56px">${ic(17, 16, '0 0 17 16', svg`<path d="M7 1.500l1.800 4.500h4.700l-3.800 2.800 1.500 4.700L7 10.500 2.800 13.500l1.500-4.700L.5 6h4.700z" fill="none" stroke="#222"/><path d="M12 2h5M12 5h5M13 8h4" stroke="#222"/>`)}</span>
        <span class="tb" style="width:32px">${ic(17, 16, '0 0 17 16', svg`<path d="M4 12C1 10 0 6 2 4l1-2.500c3-1 6-1 8 .5M2 5l2 7" fill="none" stroke="#222"/><rect x="5" y="4.500" width="11" height="11" rx="2" fill="#f7f7f7" stroke="#222"/><path d="M10.500 6.500v7M7 10h7" stroke="#222"/>`)}</span>
        <span class="tb" style="width:60px">${ic(23, 23, '0 0 23 23', svg`<circle cx="11.500" cy="11.500" r="11.500" fill="#d4d2d0"/><circle cx="11.500" cy="8.500" r="4.500" fill="#7b7775"/><path d="M3.500 20c1-5 4-6 8-6s7 1 8 6a11.500 11.500 0 01-16 0z" fill="#7b7775"/>`)}</span>
        <span class="tb" style="width:32px">${ic(14, 4, '0 0 14 4', svg`<circle cx="2" cy="2" r="1.200"/><circle cx="7" cy="2" r="1.200"/><circle cx="12" cy="2" r="1.200"/>`)}</span>
      </div>
      <div class="content">
        <div class="pdf">
          <div class="pdfinner">
            <div class="left">
              <div class="ptools">
                <span class="tb" style="width:52px;padding-right:8px">${ic(17, 12, '0 0 17 12', svg`<path d="M5 2h12M5 6h12M5 10h12" stroke="#333"/><circle cx="1.500" cy="2" r="1"/><circle cx="1.500" cy="6" r="1"/><circle cx="1.500" cy="10" r="1"/>`)}</span>
                <span class="pageinput">75</span>
                <span class="of">из 209</span>
                <span class="tb" style="margin-left:11px">${ic(14, 14, '0 0 14 14', svg`<circle cx="5.500" cy="5.500" r="4.800" fill="none" stroke="#333"/><path d="M9 9l5 5" stroke="#333"/>`)}</span>
                <div class="right">
                  <span class="pbtn">${ic(14, 2, '0 0 14 2', svg`<path d="M0 1h14" stroke="#888" stroke-width="1.400"/>`)}</span>
                  <span class="pbtn">${ic(14, 14, '0 0 14 14', svg`<path d="M7 0v14M0 7h14" stroke="#888" stroke-width="1.400"/>`)}</span>
                  <span class="pbtn">${ic(14, 4, '0 0 14 4', svg`<circle cx="2" cy="2" r="1.200" fill="#444"/><circle cx="7" cy="2" r="1.200" fill="#444"/><circle cx="12" cy="2" r="1.200" fill="#444"/>`)}</span>
                  <span style="width:1px;height:17px;background:#bbb;margin:0 4px 0 5px"></span>
                  <span class="pbtn" style="margin-right:4px">${ic(17, 17, '0 0 24 24', gear('#444'))}</span>
                </div>
              </div>
              <div class="pagearea">
                <div class="page">
                  <div class="hd l15" style="margin-top:-1px">Площадь прямоугольного поля равна</div>
                  <div class="two" style="margin-top:8px;line-height:19px">
                    <div><span class="j">116 га, а ширина — 80 м.</span><span class="j short">Найдите длину этого поля.</span></div>
                    <div><span class="j">96 га, а длина — 120 м.</span><span class="j">Найдите ширину этого поля.</span></div>
                  </div>
                  <div style="margin:17px 0 0 92px;height:21px">${circled('3')}</div>
                  <div class="hd" style="margin-top:4px;line-height:19px">Из пластины прямоугольной формы<br/>вырезали прямоугольник (см. рис.).</div>
                  <svg class="fig" width="513" height="141" viewBox="203 343 513 141" style="margin-top:5px">
                    <path d="M258 370.500H464.500V474H320.500V432.500H258Z" fill="none" stroke="#111" stroke-width="2.500"/>
                    <path d="M506 354.500H671V395H589V457H506Z" fill="none" stroke="#111" stroke-width="2.500"/>
                    <g font-family="DejaVu Serif" font-size="13.500" fill="#1c1c1c" text-anchor="middle">
                      <text x="382" y="363">7 м</text><text x="235.500" y="405">3 м</text><text x="297" y="428">3 м</text><text x="337.500" y="461">2 м</text>
                      <text x="687.500" y="381">2 м</text><text x="638.500" y="413">4 м</text><text x="608.500" y="440">3 м</text><text x="551.500" y="476">4 м</text>
                    </g>
                  </svg>
                  <div class="hd l54" style="line-height:19.300px">а) Найдите периметр полученной фи-<br/>гуры.</div>
                  <div class="hd l07" style="margin-top:3px;line-height:19.300px">б) Найдите площадь полученной фигуры.</div>
                  <div class="hd" style="margin-top:3px;line-height:19.500px">в) Сколько граммов краски потребуется<br/><span class="l60">для окрашивания фигуры, если на 1 м²</span><br/><span class="l55">требуется 20 г краски?</span></div>
                  <div class="two" style="margin-top:12px;height:20px">
                    <div>${circled('4')}</div><div>${circled('4')}</div>
                  </div>
                  <div class="two" style="margin-top:5px">
                    <div><span class="j">Во сколько раз увеличит-</span><span class="j">ся площадь квадрата, если</span><span class="j">его сторону увеличить в</span><span>3 раза?</span></div>
                    <div><span class="j">Во сколько раз уменьшит-</span><span class="j">ся площадь квадрата, если</span><span class="j">его сторону уменьшить в</span><span>2 раза?</span></div>
                  </div>
                </div>
                <div class="next"></div>
              </div>
            </div>
            <div class="vs">
              <span style="margin-top:7px">${ic(9, 5, '0 0 9 5', svg`<path d="M4.500 0L9 5H0z" fill="#555"/>`)}</span>
              <span class="vthumb"></span><span style="flex:1"></span>
              <span style="margin-bottom:5px">${ic(9, 5, '0 0 9 5', svg`<path d="M0 0h9L4.500 5z" fill="#555"/>`)}</span>
            </div>
          </div>
        </div>
        <div class="side">
          <div class="sic">${ic(18, 18, '0 0 18 18', svg`<circle cx="7" cy="7" r="5" fill="none" stroke="#1560c8" stroke-width="2.600"/><path d="M11 11l5 5" stroke="#7a3ed8" stroke-width="3"/>`)}</div>
          <div class="sic">${ic(19, 19, '0 0 19 19', svg`<path d="M8 1l2 6 6 2-6 2-2 6-2-6-6-2 6-2z" fill="#6a3fe8"/><path d="M15 11l1 2.500 2.500 1-2.500 1-1 2.500-1-2.500-2.500-1 2.500-1z" fill="#f4a81c"/>`)}</div>
          <div class="sic">${ic(18, 18, '0 0 18 18', svg`<path d="M9 1h8v7l-8 9-8-7z" fill="#1a72d8"/><circle cx="13" cy="5" r="2" fill="#f6c64a"/>`)}</div>
          <div class="sic">${ic(17, 14, '0 0 17 14', svg`<rect y="3" width="17" height="11" rx="1" fill="#0f7f9c"/><rect y="3" width="17" height="5" fill="#4a8ad8"/><rect x="6" y="0.500" width="5" height="3" fill="none" stroke="#c08a28"/><rect x="7" y="6" width="3" height="3" fill="#f0c040"/>`)}</div>
          <div class="sic">${ic(18, 18, '0 0 18 18', svg`<circle cx="6" cy="6" r="3" fill="#1a4fc8"/><path d="M1 17c0-6 2-8 5-8s5 2 5 8z" fill="#1a4fc8"/><path d="M11 1h1.500v1.500H14V1h1.500v1.500H17V1v5l-1 1v4h1v2h-6v-2h1V7l-1-1z" fill="#7a3ed8"/>`)}</div>
          <div class="sic">${ic(17, 17, '0 0 17 17', svg`<path d="M8.500 0l7.500 4v9l-7.500 4L1 13V4z" fill="#6a6ae0"/><path d="M8.500 0l7.500 4-3 3-4.500-3z" fill="#4aa8e8"/><path d="M1 13l7.500 4 4-3-7-3z" fill="#e87ac8"/><path d="M5 7l3.500-2 3.500 2v3.500l-3.500 2-3.500-2z" fill="#fff"/>`)}</div>
          <div class="sic">${ic(17, 16, '0 0 17 16', svg`<rect x="6" y="1" width="11" height="13" rx="1" fill="#28a8ea"/><rect x="6" y="7" width="11" height="7" fill="#0f78d4"/><rect y="3" width="10" height="10" rx="1" fill="#0f62b8"/><circle cx="5" cy="8" r="2.700" fill="none" stroke="#fff" stroke-width="1.400"/>`)}</div>
          <div class="sic" style="margin-top:4px">${ic(11, 11, '0 0 11 11', svg`<path d="M5.500 0v11M0 5.500h11" stroke="#444"/>`)}</div>
          <div class="sdiv"></div>
          <div class="sic" style="height:46px">${ic(15, 12, '0 0 15 12', svg`<rect x=".5" y=".5" width="14" height="11" rx="1.500" fill="none" stroke="#222"/><path d="M10 .5v11M2.500 6H8M6 3.500L8.500 6 6 8.500" fill="none" stroke="#222"/>`)}</div>
          <div class="sic" style="height:38px">${ic(17, 17, '0 0 24 24', gear('#333'))}</div>
        </div>
      </div>
    `;
  }
}

const tbIcons: [number, unknown, boolean][] = [
  [177, ic(24, 24, '0 0 24 24', svg`<circle cx="12" cy="12" r="12" fill="#7c55e8"/><path d="M12 5c3 0 6 5 6 9 0 3-3 3-6 3s-6 0-6-3c0-4 3-9 6-9z" fill="#fff"/>`), false],
  [232, ic(24, 22, '0 0 24 22', svg`<rect y="0" width="9" height="4" fill="#e8a91c"/><rect y="2" width="22" height="18" fill="#f8d563"/><rect x="1" y="20" width="21" height="2" fill="#d9a82a"/><rect x="4" y="14" width="14" height="6" fill="#3ea3e8"/><rect x="9" y="17" width="4" height="3" fill="#f8d563"/>`), true],
  [282, ic(24, 24, '0 0 24 24', svg`<circle cx="12" cy="12" r="12" fill="#fc3f1d"/><text x="12" y="18" text-anchor="middle" font-family="Liberation Sans" font-weight="700" font-size="16" fill="#fff">Я</text>`), false],
  [331, ic(24, 24, '0 0 48 48', edgeBody), true],
  [380, ic(24, 24, '0 0 24 24', svg`<path d="M7 5V2h10v3" fill="none" stroke="#2aa0e8" stroke-width="1.800"/><rect x="1" y="5" width="22" height="19" rx="2" fill="#f5f5f5"/><rect x="7" y="9" width="4.500" height="4.500" fill="#e8471c"/><rect x="12.500" y="9" width="4.500" height="4.500" fill="#7fba00"/><rect x="7" y="14.500" width="4.500" height="4.500" fill="#00a4ef"/><rect x="12.500" y="14.500" width="4.500" height="4.500" fill="#ffb900"/>`), false],
  [429, ic(24, 24, '0 0 48 48', yandexBody), true],
  [478, ic(24, 24, '0 0 24 24', svg`<path d="M12 0l12 8v16H0V8z" fill="#0a66b8"/><path d="M0 8l12 8 12-8v16H0z" fill="#2aa4ec"/><path d="M12 16L0 8v2l12 8 12-8V8z" fill="#fff"/>`), false],
  [527, ic(22, 24, '0 0 22 24', svg`<path d="M11 0l11 6v12l-11 6-11-6V6z" fill="#0a9a84"/><path d="M11 6l6 2v5c0 3-3 5-6 6-3-1-6-3-6-6V8z" fill="none" stroke="#a8e8d8" stroke-width="1.200"/><path d="M8 11v3M11 11v3M14 11v3" stroke="#a8e8d8"/>`), false],
  [576, ic(24, 24, '0 0 24 24', svg`<path d="M8 2h12v20H8z" fill="#fff" stroke="#2b579a"/><path d="M13 6h5M13 9h5M13 12h5M13 15h5M13 18h5" stroke="#2b579a"/><path d="M1 3.500l12-1.500v20L1 20.500z" fill="#2b579a"/><text x="7" y="16" text-anchor="middle" font-family="Liberation Sans" font-weight="700" font-size="11" fill="#fff">W</text>`), true],
];

@customElement('task-bar')
class TaskBar extends LitElement {
  static styles = css`
    :host { position: absolute; left: 0; right: 0; top: 860px; height: 40px; display: flex; align-items: center;
      background: linear-gradient(90deg,#243942 0,#233640 45%,#1a2a3c 100%); font: 12px/18px "Noto Sans", sans-serif; color: #eee; }
    .zone { flex: 1; position: relative; height: 40px; }
    .it { position: absolute; top: 0; height: 40px; width: 48px; display: flex; align-items: center; justify-content: center; box-sizing: border-box; }
    .it.act { background: #4a5e68; }
    .mark { position: absolute; left: 4px; right: 4px; bottom: 0; height: 2px; background: #76b9ed; }
    .it.act .mark { left: 0; right: 0; }
    .clock { width: 58px; flex: none; text-align: center; line-height: 18px; font-size: 11.5px; white-space: nowrap; }
    .ru { font-size: 12px; margin: 0 10px 0 8px; }
    .tray { display: flex; align-items: center; }
    .t { display: flex; justify-content: center; align-items: center; width: 24px; }
    .t.pen { width: 32px; }
    .note { width: 48px; display: flex; justify-content: center; margin-right: 9px; }
  `;

  render() {
    const left = (cx: number) => `left:${cx - 24}px`;
    return html`
      <div class="zone">
        <span class="it" style=${left(24)}>${ic(16, 16, '0 0 16 16', svg`<path d="M0 2.400l6.600-.9V7.700H0zM7.400 1.400L16 0v7.700H7.400zM0 8.400h6.600v6.200L0 13.700zM7.400 8.400H16V16l-8.600-1.300z" fill="#fff"/>`)}</span>
        <span class="it" style=${left(72)}>${ic(16, 16, '0 0 16 16', svg`<circle cx="9.500" cy="6.500" r="5.500" fill="none" stroke="#fff" stroke-width="1.200"/><path d="M5.500 10.500L.5 15.500" stroke="#fff" stroke-width="1.300"/>`)}</span>
        <span class="it" style=${left(119)}>${ic(17, 17, '0 0 17 17', svg`<rect x="1" y="4" width="10" height="9" fill="none" stroke="#fff"/><path d="M1 1h10M1 16h10" stroke="#fff"/><rect x="13.500" y="1" width="3" height="1.400" fill="#fff"/><rect x="13.500" y="6" width="3" height="3" fill="#fff"/><rect x="13.500" y="14.500" width="3" height="1.400" fill="#fff"/>`)}</span>
        ${tbIcons.map(([cx, icon, mark]) => html`<span class="it ${cx === 331 ? 'act' : ''}" style=${left(cx)}>${icon}${mark ? html`<span class="mark"></span>` : ''}</span>`)}
      </div>
      <div class="tray">
        <span class="t">${ic(12, 7, '0 0 12 7', svg`<path d="M.5 6.500L6 1l5.500 5.500" fill="none" stroke="#fff" stroke-width="1.100"/>`)}</span>
        <span class="t">${ic(13, 16, '0 0 13 16', svg`<rect x=".5" y="4" width="8" height="8" rx="1" fill="none" stroke="#fff"/><path d="M8.500 7l4-2v6l-4-2" fill="none" stroke="#fff"/><path d="M2 1h4M2 15h4" stroke="#fff"/>`)}</span>
        <span class="t">${ic(12, 17, '0 0 12 17', svg`<rect x="3" y="0" width="6" height="11" rx="3" fill="#fff"/><path d="M1 7c0 4 2 6 5 6s5-2 5-6M6 13v3M3 16.500h6" fill="none" stroke="#fff"/>`)}</span>
        <span class="t">${ic(17, 16, '0 0 17 16', svg`<rect x=".5" y="1" width="14" height="11" fill="none" stroke="#fff"/><path d="M1 15h6M5 6l3-2 2 2M9 8l-3 2-2-2" fill="none" stroke="#fff"/><circle cx="13.500" cy="12.500" r="3.200" fill="#f8911e"/>`)}</span>
        <span class="t">${ic(14, 14, '0 0 14 14', svg`<path d="M1 13a12 12 0 0112-12M4 13a9 9 0 019-9M7 13a6 6 0 016-6" fill="none" stroke="#a8b0b8" stroke-dasharray="1.400 1"/><circle cx="11" cy="12" r="1.500" fill="#fff"/>`)}</span>
        <span class="t">${ic(16, 14, '0 0 16 14', svg`<path d="M1 5h2.500L7 1.500v11L3.500 9H1z" fill="none" stroke="#fff"/><path d="M9 4.500a4 4 0 010 5M11 3a6 6 0 010 8" fill="none" stroke="#fff"/><path d="M13.500 1.500a8 8 0 010 11" fill="none" stroke="#667"/>`)}</span>
        <span class="t pen">${ic(16, 16, '0 0 16 16', svg`<path d="M2 15c-2-2 0-4 2-3l6-8c1-2 3-3 4-2s0 2-1 3l-6 7M8 6l3 3c1 1 3 0 4-1" fill="none" stroke="#fff"/>`)}</span>
        <span class="ru">РУС</span>
        <span class="clock">19:19<br/>20.02.2023</span>
        <span class="note">${ic(16, 16, '0 0 16 16', svg`<path d="M.5 1.500h15v11H11l-3 3-3-3H.5z" fill="none" stroke="#fff"/>`)}</span>
      </div>
    `;
  }
}

@customElement('app-root')
export class AppRoot extends LitElement {
  static styles = css`
    :host { display: block; position: relative; width: 1440px; height: 900px; overflow: hidden;
      background: linear-gradient(90deg,rgba(0,80,165,0) 55%,rgba(0,84,170,1) 100%), linear-gradient(180deg,#0a8fe4 0,#00a8f0 40%,#00b3f5 100%); }
    .desk { position: absolute; width: 75px; display: flex; flex-direction: column; align-items: center; }
    .lab { margin-top: 3px; width: 75px; text-align: center; font: 11.5px/15px "Noto Sans", sans-serif; letter-spacing: -.15px; color: #fff;
      text-shadow: 0 1px 2px #000, 0 0 2px rgba(0,0,0,.8); overflow-wrap: break-word; }
    .desk.first .lab { margin-top: 2px; }
    .nowrap { white-space: nowrap; }
    .behind { position: absolute; left: 1431px; top: 0; width: 9px; height: 655px; background: #fff; }
    .behind i { position: absolute; left: 0; right: 0; height: 1px; background: #c8c8c8; }
    .dark { position: absolute; left: 1431px; top: 655px; width: 9px; height: 27px; background: #17344f; }
  `;

  render() {
    return html`
      ${desktopItems.map(([cx, top, icon, label]) => html`
        <div class="desk ${top === 8 ? 'first' : ''}" style="left:${cx - 37.5}px;top:${top}px">
          ${desktopIcons[icon]}
          <span class="lab ${label.includes(' ') && label.length > 12 ? '' : 'nowrap'}">${label}</span>
        </div>`)}
      <div class="behind"><i style="top:53px"></i><i style="top:146px"></i></div>
      <div class="dark"></div>
      <explorer-window></explorer-window>
      <edge-window></edge-window>
      <task-bar></task-bar>
    `;
  }
}
